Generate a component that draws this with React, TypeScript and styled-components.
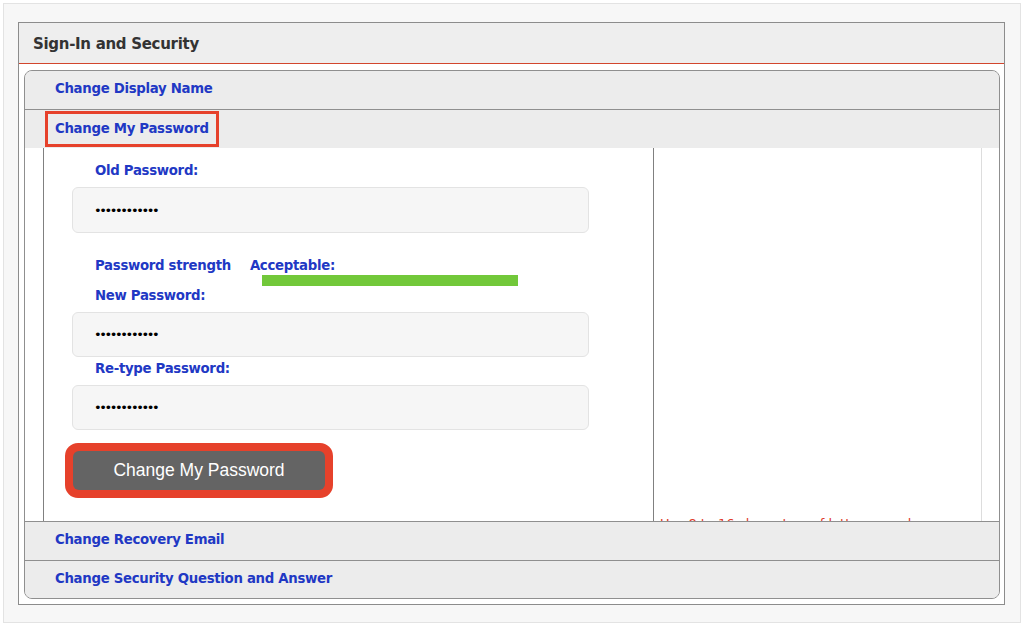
import styled, { createGlobalStyle } from 'styled-components';

const GlobalStyle = createGlobalStyle`
  html, body {
    margin: 0;
    padding: 0;
    background: #ffffff;
  }
  body {
    font-family: "DejaVu Sans", Verdana, sans-serif;
  }
`;

const blue = '#2138c4';
const highlight = '#e6412b';

const Frame = styled.div`
  margin: 3px;
  height: 620px;
  box-sizing: border-box;
  border: 1px solid #e3e3e3;
  background: #f7f7f7;
  padding: 18px 14px 0 14px;
`;

const Panel = styled.section`
  width: 987px;
  height: 583px;
  box-sizing: border-box;
  border: 1px solid #8c8c8c;
  background: #ffffff;
  display: flex;
  flex-direction: column;
`;

const PanelHeader = styled.h2`
  margin: 0;
  height: 41px;
  box-sizing: border-box;
  border-bottom: 1px solid #d2452c;
  background: #eeeeee;
  color: #333333;
  font-size: 15px;
  font-weight: bold;
  letter-spacing: -0.3px;
  display: flex;
  align-items: center;
  padding: 2px 0 0 14px;
`;

const Accordion = styled.div`
  margin: 6px 4px 0 5px;
  border: 1px solid #8f8f8f;
  border-radius: 8px;
  overflow: hidden;
  background: #ececec;
`;

const Row = styled.div<{ $last?: boolean }>`
  height: ${(p) => (p.$last ? '37px' : '39px')};
  box-sizing: border-box;
  padding-bottom: ${(p) => (p.$last ? '3px' : '4px')};
  background: #ececec;
  border-bottom: ${(p) => (p.$last ? 'none' : '1px solid #8f8f8f')};
  display: flex;
  align-items: center;
`;

const RowTitle = styled.a<{ $marked?: boolean }>`
  color: ${blue};
  font-size: 13.3px;
  font-weight: bold;
  letter-spacing: -0.3px;
  text-decoration: none;
  margin-left: ${(p) => (p.$marked ? '20px' : '30px')};
  padding: ${(p) => (p.$marked ? '0 0 2px 7px' : '0')};
  height: ${(p) => (p.$marked ? '36px' : 'auto')};
  width: ${(p) => (p.$marked ? '174px' : 'auto')};
  box-sizing: border-box;
  border: ${(p) => (p.$marked ? `3px solid ${highlight}` : 'none')};
  display: flex;
  align-items: center;
`;

const OpenHeader = styled.div`
  height: 38px;
  background: #ececec;
  display: flex;
  align-items: flex-start;
  padding-top: 1px;
  box-sizing: border-box;
`;

const Body = styled.div`
  height: 373px;
  background: #ffffff;
  border-bottom: 1px solid #8f8f8f;
  overflow: hidden;
  display: flex;
  padding-left: 18px;
`;

const FormColumn = styled.div`
  width: 609px;
  border-left: 1px solid #808080;
  border-right: 1px solid #808080;
  display: flex;
  flex-direction: column;
  padding-top: 14px;
`;

const SideColumn = styled.div`
  width: 328px;
  box-sizing: border-box;
  border-right: 1px solid #dddddd;
  padding: 368px 0 0 6px;
`;

const Hint = styled.p`
  margin: 0;
  color: #e03b2a;
  font-size: 13px;
  line-height: 16px;
  white-space: nowrap;
`;

const Label = styled.label<{ $gap?: number }>`
  display: block;
  height: 18px;
  line-height: 18px;
  margin: ${(p) => p.$gap ?? 0}px 0 0 51px;
  color: ${blue};
  font-size: 13.3px;
  font-weight: bold;
  letter-spacing: -0.3px;
`;

const Input = styled.input<{ $h?: number }>`
  display: block;
  width: 517px;
  height: ${(p) => p.$h ?? 46}px;
  box-sizing: border-box;
  margin: 7px 0 0 28px;
  padding: 0 0 0 21px;
  border: 1px solid #e3e3e3;
  border-radius: 6px;
  background: #f6f6f6;
  font-family: "DejaVu Sans", sans-serif;
  font-size: 13px;
  letter-spacing: -2.4px;
  color: #000000;
  outline: none;
`;

const StrengthRow = styled.div`
  display: flex;
  margin: 23px 0 0 51px;
  height: 18px;
  align-items: center;
  gap: 19px;
`;

const StrengthText = styled.span`
  color: ${blue};
  font-size: 13.3px;
  font-weight: bold;
  letter-spacing: -0.3px;
`;

const Meter = styled.div`
  margin: 1px 0 0 218px;
  width: 256px;
  height: 11px;
  background: #eeeeee;
`;

const MeterFill = styled.div`
  height: 100%;
  background: #72c83a;
`;

const ButtonMark = styled.div`
  margin: 13px 0 0 21px;
  width: 268px;
  height: 55px;
  box-sizing: border-box;
  border: 8px solid ${highlight};
  border-radius: 13px;
  background: ${highlight};
`;

const SubmitButton = styled.button`
  width: 100%;
  height: 100%;
  border: none;
  border-radius: 6px;
  background: #646464;
  color: #ffffff;
  font-family: "Liberation Sans", Arial, sans-serif;
  font-size: 17.5px;
  padding: 0 0 1px 0;
  cursor: pointer;
`;

const dots = '••••••••••••';

export default function App() {
  const strength = 100;
  return (
    <>
      <GlobalStyle />
      <Frame>
        <Panel>
          <PanelHeader>Sign-In and Security</PanelHeader>
          <Accordion>
            <Row>
              <RowTitle>Change Display Name</RowTitle>
            </Row>
            <OpenHeader>
              <RowTitle $marked>Change My Password</RowTitle>
            </OpenHeader>
            <Body>
              <FormColumn>
                <Label>Old Password:</Label>
                <Input type="text" readOnly value={dots} />
                <StrengthRow>
                  <StrengthText>Password strength</StrengthText>
                  <StrengthText>Acceptable:</StrengthText>
                </StrengthRow>
                <Meter>
                  <MeterFill style={{ width: `${strength}%` }} />
                </Meter>
                <Label $gap={1}>New Password:</Label>
                <Input type="text" readOnly value={dots} $h={45} />
                <Label $gap={3}>Re-type Password:</Label>
                <Input type="text" readOnly value={dots} $h={45} />
                <ButtonMark>
                  <SubmitButton>Change My Password</SubmitButton>
                </ButtonMark>
              </FormColumn>
              <SideColumn>
                <Hint>Use 8 to 16 characters of letters, numbers</Hint>
              </SideColumn>
            </Body>
            <Row>
              <RowTitle>Change Recovery Email</RowTitle>
            </Row>
            <Row $last>
              <RowTitle>Change Security Question and Answer</RowTitle>
            </Row>
          </Accordion>
        </Panel>
      </Frame>
    </>
  );
}
